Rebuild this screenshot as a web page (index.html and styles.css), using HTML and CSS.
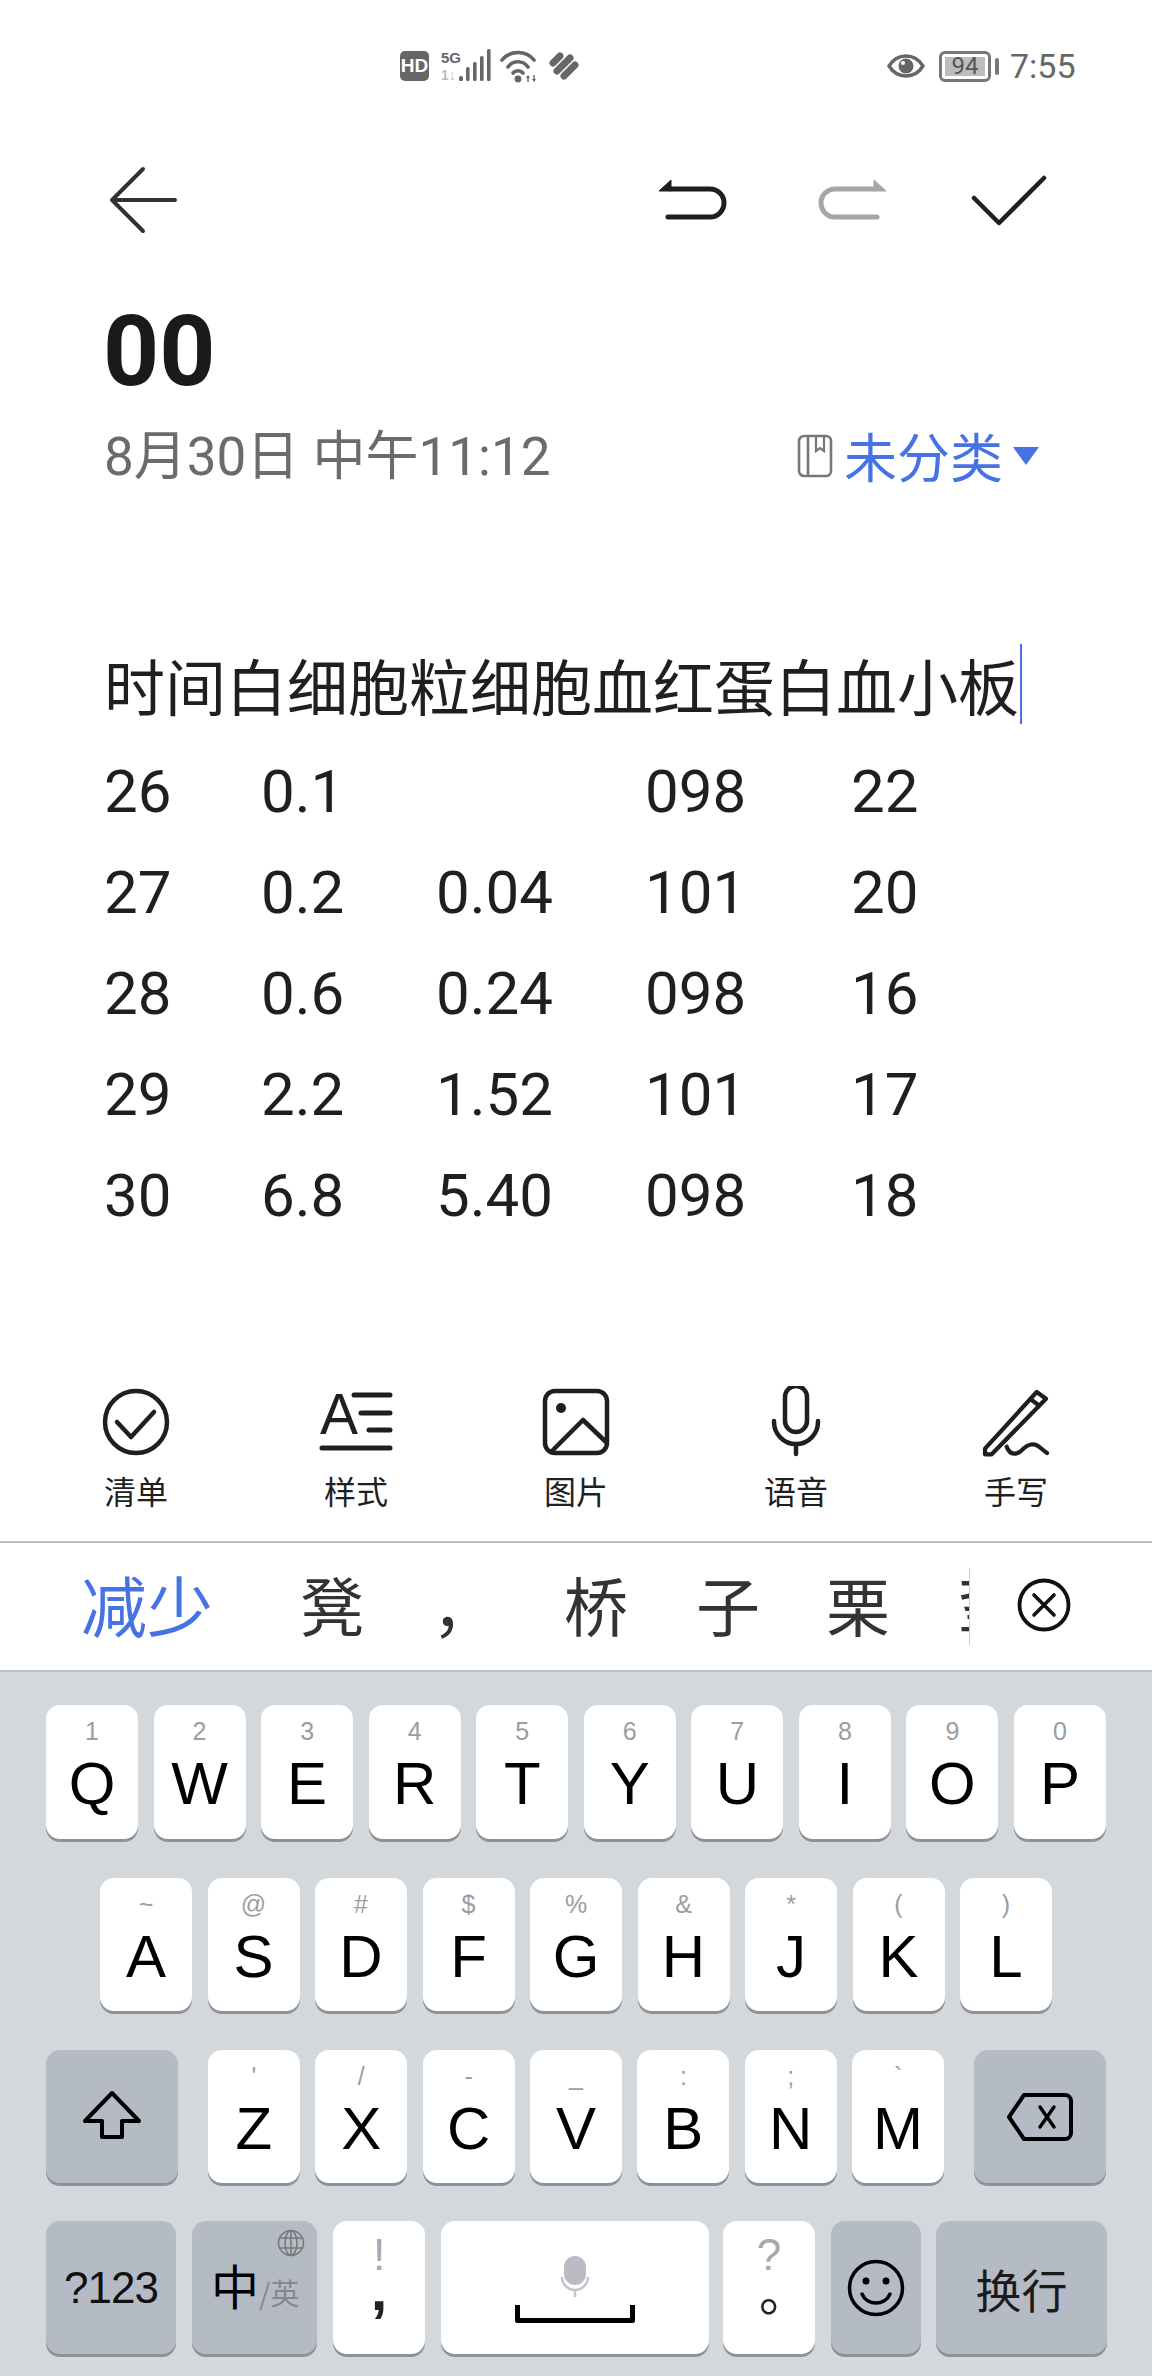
FILE: index.html
```html
<!DOCTYPE html>
<html lang="zh-CN">
<head>
<meta charset="utf-8">
<title>备忘录</title>
<link rel="stylesheet" href="styles.css">
</head>
<body>
<div class="page">
  <header class="status">
    <span class="hd">HD</span>
    <div class="net"><span class="net-5g">5G</span><span class="net-lte">1↓</span></div>
    <svg class="sig" width="36" height="34" viewBox="0 0 36 34"><g fill="#666"><rect x="0" y="27" width="4" height="5" rx="1.5"/><rect x="7" y="18" width="3.6" height="14" rx="1.5"/><rect x="14" y="13" width="3.6" height="19" rx="1.5"/><rect x="21" y="7" width="3.6" height="25" rx="1.5"/><rect x="28" y="0" width="3.6" height="32" rx="1.5"/></g></svg>
    <svg class="wifi" width="40" height="34" viewBox="0 0 40 34"><g fill="none" stroke="#666" stroke-width="3.6" stroke-linecap="round"><path d="M2 11C10 1 26 1 34 11"/><path d="M8 18C13 11 23 11 28 18"/><path d="M13 24C15.5 21 20.5 21 23 24"/></g><circle cx="18" cy="30" r="3.4" fill="#666"/><path d="M28 26l-2 3h1.3v4h1.4v-4H30zM34 33l2-3h-1.3v-4h-1.4v4H32z" fill="#666"/></svg>
    <svg class="heart" width="34" height="30" viewBox="0 0 34 30"><path d="M6 12L13 5M10 20L23 7M17 25L28 14" fill="none" stroke="#666" stroke-width="7" stroke-linecap="round"/></svg>
    <svg class="eye" width="38" height="24" viewBox="0 0 38 24"><path d="M2 12C7 4 13 2 19 2s12 2 17 10c-5 8-11 10-17 10S7 20 2 12z" fill="none" stroke="#666" stroke-width="3.4"/><circle cx="19" cy="12" r="7.5" fill="#666"/><circle cx="16" cy="9" r="2" fill="#fff"/></svg>
    <div class="batt"><span class="batt-num">94</span></div>
    <span class="batt-nub"></span>
    <span class="clock">7:55</span>
  </header>

  <nav class="toolbar">
    <svg width="68" height="68" viewBox="0 0 68 68"><path d="M34 3L3 34L34 65M3 34H66" fill="none" stroke="#333" stroke-width="4" stroke-linecap="round" stroke-linejoin="round"/></svg>
    <svg class="tb-undo" width="76" height="46" viewBox="0 0 76 46"><path d="M4 14L16 3V14z" fill="#1f1f1f" stroke="#1f1f1f" stroke-width="1" stroke-linejoin="round"/><path d="M16 12H55a14 14 0 0 1 0 28H13" fill="none" stroke="#1f1f1f" stroke-width="5" stroke-linecap="round"/></svg>
    <svg class="tb-redo" width="76" height="46" viewBox="0 0 76 46"><g transform="matrix(-1 0 0 1 76 0)"><path d="M4 14L16 3V14z" fill="#a6a6a6" stroke="#a6a6a6" stroke-width="1" stroke-linejoin="round"/><path d="M16 12H55a14 14 0 0 1 0 28H13" fill="none" stroke="#a6a6a6" stroke-width="5" stroke-linecap="round"/></g></svg>
    <svg class="tb-check" width="80" height="54" viewBox="0 0 80 54"><path d="M4 23L29 48L74 3" fill="none" stroke="#1f1f1f" stroke-width="4.5" stroke-linecap="round" stroke-linejoin="round"/></svg>
  </nav>

  <h1 class="title">00</h1>
  <div class="meta">
    <span class="date">8月30日 中午11:12</span>
    <svg class="book" width="36" height="44" viewBox="0 0 36 44"><rect x="2" y="2" width="32" height="40" rx="5" fill="none" stroke="#777" stroke-width="2.6"/><path d="M11 2V42" stroke="#777" stroke-width="2.6"/><path d="M19 2V17l4-3 4 3V2" fill="none" stroke="#777" stroke-width="2.2"/></svg>
    <span class="folder">未分类</span>
    <span class="tri"></span>
  </div>

  <main class="note">
    <div class="note-head"><span>时间白细胞粒细胞血红蛋白血小板</span><span class="caret"></span></div>
    <div class="grid">
      <span>26</span><span>0.1</span><span></span><span>098</span><span>22</span>
      <span>27</span><span>0.2</span><span>0.04</span><span>101</span><span>20</span>
      <span>28</span><span>0.6</span><span>0.24</span><span>098</span><span>16</span>
      <span>29</span><span>2.2</span><span>1.52</span><span>101</span><span>17</span>
      <span>30</span><span>6.8</span><span>5.40</span><span>098</span><span>18</span>
    </div>
  </main>

  <section class="tools">
    <div class="tool">
      <svg width="72" height="72" viewBox="0 0 72 72"><circle cx="36" cy="36" r="31" fill="none" stroke="#1f1f1f" stroke-width="4.5"/><path d="M17 36L31 51L54 26" fill="none" stroke="#1f1f1f" stroke-width="4.5" stroke-linecap="round" stroke-linejoin="round"/></svg>
      <span>清单</span>
    </div>
    <div class="tool">
      <svg class="tool-a" width="78" height="72" viewBox="0 0 78 72"><text x="3" y="48" class="icon-a">A</text><g stroke="#1f1f1f" stroke-width="5" stroke-linecap="round"><path d="M37 9H73M44 27H73M52 44H73M5 62H73"/></g></svg>
      <span>样式</span>
    </div>
    <div class="tool">
      <svg width="72" height="72" viewBox="0 0 72 72"><rect x="5" y="5" width="62" height="62" rx="10" fill="none" stroke="#1f1f1f" stroke-width="4.5"/><circle cx="21" cy="22" r="5" fill="#1f1f1f"/><path d="M12 65L43 34L66 56" fill="none" stroke="#1f1f1f" stroke-width="4.5" stroke-linejoin="round"/></svg>
      <span>图片</span>
    </div>
    <div class="tool">
      <svg width="72" height="72" viewBox="0 8 72 72"><rect x="25" y="8" width="22" height="46" rx="11" fill="none" stroke="#1f1f1f" stroke-width="4.5"/><path d="M14 43v1a22 22 0 0 0 44 0v-1M36 66V76" fill="none" stroke="#1f1f1f" stroke-width="4.5" stroke-linecap="round"/></svg>
      <span>语音</span>
    </div>
    <div class="tool">
      <svg width="72" height="72" viewBox="0 0 72 72"><path d="M5 62.7L56.7 6L66 12.7L11.7 68.3H5zM51.7 14L61 21" fill="none" stroke="#1f1f1f" stroke-width="4.2" stroke-linejoin="round"/><path d="M26.7 60.7C30 70 38 69 43 63c5-5 11-6 15-3 3 2 6 5 9 7" fill="none" stroke="#1f1f1f" stroke-width="4.2" stroke-linecap="round"/></svg>
      <span>手写</span>
    </div>
  </section>

  <section class="cands">
    <span class="cand cand-on">减少</span>
    <span class="cand c2">凳</span>
    <span class="cand c3">，</span>
    <span class="cand c4">桥</span>
    <span class="cand c5">子</span>
    <span class="cand c6">栗</span>
    <span class="cand-clip"><span class="cand">垫</span></span>
    <svg class="cand-x" width="54" height="54" viewBox="0 0 54 54"><circle cx="27" cy="27" r="24.5" fill="none" stroke="#111" stroke-width="3.8"/><path d="M17 17L37 37M37 17L17 37" stroke="#111" stroke-width="3.6" stroke-linecap="round"/></svg>
  </section>

  <section class="kbd">
    <div class="row row-q">
      <div class="key"><i>1</i><b>Q</b></div><div class="key"><i>2</i><b>W</b></div><div class="key"><i>3</i><b>E</b></div><div class="key"><i>4</i><b>R</b></div><div class="key"><i>5</i><b>T</b></div><div class="key"><i>6</i><b>Y</b></div><div class="key"><i>7</i><b>U</b></div><div class="key"><i>8</i><b>I</b></div><div class="key"><i>9</i><b>O</b></div><div class="key"><i>0</i><b>P</b></div>
    </div>
    <div class="row row-a">
      <div class="key"><i>~</i><b>A</b></div><div class="key"><i>@</i><b>S</b></div><div class="key"><i>#</i><b>D</b></div><div class="key"><i>$</i><b>F</b></div><div class="key"><i>%</i><b>G</b></div><div class="key"><i>&amp;</i><b>H</b></div><div class="key"><i>*</i><b>J</b></div><div class="key"><i>(</i><b>K</b></div><div class="key"><i>)</i><b>L</b></div>
    </div>
    <div class="row">
      <div class="key fn k-side"><svg class="shift" width="60" height="50" viewBox="0 0 60 50"><path d="M30 3L3 31H20V47H40V31H57Z" fill="none" stroke="#000" stroke-width="4" stroke-linejoin="round"/></svg></div>
      <div class="letters">
        <div class="key"><i>'</i><b>Z</b></div><div class="key"><i>/</i><b>X</b></div><div class="key"><i>-</i><b>C</b></div><div class="key"><i>_</i><b>V</b></div><div class="key"><i>:</i><b>B</b></div><div class="key"><i>;</i><b>N</b></div><div class="key"><i>`</i><b>M</b></div>
      </div>
      <div class="key fn k-side"><svg width="66" height="50" viewBox="0 0 66 50"><path d="M17 3H58a6 6 0 0 1 6 6V41a6 6 0 0 1-6 6H17L2 25Z" fill="none" stroke="#000" stroke-width="4" stroke-linejoin="round"/><path d="M33 15L47 35M47 15L33 35" stroke="#000" stroke-width="3.4" stroke-linecap="round"/></svg></div>
    </div>
    <div class="row row-last">
      <div class="key fn k-sym"><span class="sym">?123</span></div>
      <div class="key fn k-lang">
        <svg class="globe" width="28" height="28" viewBox="0 0 28 28"><g fill="none" stroke="#777" stroke-width="1.5"><circle cx="14" cy="14" r="12.5"/><ellipse cx="14" cy="14" rx="6" ry="12.5"/><path d="M14 1.5V26.5M2 9H26M2 19H26"/></g></svg>
        <span class="zh">中</span><span class="en">/英</span>
      </div>
      <div class="key k-p"><span class="p-hint">!</span><span class="p-comma">,</span></div>
      <div class="key k-space">
        <svg width="120" height="72" viewBox="0 0 120 72"><rect x="49" y="1" width="22" height="29" rx="11" fill="#b9bcc2"/><path d="M47 22a13 13 0 0 0 26 0M60 36V42" fill="none" stroke="#c2c5ca" stroke-width="2.5"/><path d="M2.5 50V65.5H117.5V50" fill="none" stroke="#000" stroke-width="5" stroke-linejoin="round"/></svg>
      </div>
      <div class="key k-p k-period"><span class="p-hint">?</span><span class="p-stop">。</span></div>
      <div class="key fn k-emoji"><svg width="58" height="60" viewBox="0 0 58 60"><circle cx="29" cy="30" r="26.5" fill="none" stroke="#000" stroke-width="3.5"/><circle cx="19" cy="23" r="3.5"/><circle cx="39" cy="23" r="3.5"/><path d="M15 36C20 48 38 48 43 36" fill="none" stroke="#000" stroke-width="3.5" stroke-linecap="round"/></svg></div>
      <div class="key fn k-enter"><span class="enter">换行</span></div>
    </div>
  </section>
</div>
</body>
</html>
```

FILE: styles.css
```css
* { box-sizing: border-box; }
html, body { margin: 0; padding: 0; background: #fff; }
.page { width: 1152px; height: 2376px; display: flex; flex-direction: column; overflow: hidden; font-family: Roboto, "Noto Sans CJK SC", sans-serif; color: #1f1f1f; }

.status { height: 132px; display: flex; align-items: center; padding-left: 400px; color: #666; flex: none; }
.hd { width: 29px; height: 30px; background: #666; border-radius: 5px; color: #fff; font-size: 19px; font-weight: 700; display: flex; align-items: center; justify-content: center; font-family: "Liberation Sans Narrow", "Liberation Sans", sans-serif; }
.net { width: 18px; margin-left: 12px; display: flex; flex-direction: column; line-height: 14px; font-family: "Liberation Sans Narrow", "Liberation Sans", sans-serif; }
.net-5g { font-size: 15px; font-weight: 700; }
.net-lte { font-size: 14px; color: #bbb; margin-top: 3px; font-weight: 700; }
.wifi { margin-left: 5px; }
.heart { margin-left: 7px; }
.eye { margin-left: 306px; }
.batt { width: 52px; height: 31px; margin-left: 14px; border: 3px solid #777; border-radius: 6px; padding: 3px; display: flex; }
.batt-num { flex: 1; background: #bdbdbd; color: #555; font-size: 24px; line-height: 19px; text-align: center; }
.batt-nub { width: 4px; height: 17px; background: #777; border-radius: 2px; margin-left: 4px; }
.clock { font-size: 34px; margin-left: 11px; color: #666; }

.toolbar { height: 136px; display: flex; align-items: center; padding-left: 109px; flex: none; }
.tb-undo { margin-left: 478px; }
.tb-redo { margin-left: 83px; }
.tb-check { margin-left: 80px; margin-top: 4px; }

.title { margin: 0; height: 150px; padding: 24px 0 0 103px; font-size: 98px; line-height: 120px; font-weight: 700; color: #1a1a1a; flex: none; }

.meta { height: 76px; display: flex; align-items: center; padding-left: 104px; flex: none; }
.date { font-size: 53px; color: #6b6b6b; width: 693px; margin-bottom: 8px; white-space: nowrap; }
.folder { font-size: 53px; color: #4672e4; margin-left: 11px; margin-bottom: 2px; }
.tri { margin-left: 10px; width: 0; height: 0; border-left: 13px solid transparent; border-right: 13px solid transparent; border-top: 18px solid #4672e4; }

.note { height: 892px; padding: 150px 0 0 104px; font-size: 60px; color: #1f1f1f; flex: none; }
.note-head { display: flex; align-items: center; height: 80px; font-size: 61px; white-space: nowrap; }
.caret { width: 2px; height: 80px; background: #4672e4; margin-left: 1px; }
.grid { display: grid; grid-template-columns: 157px 175px 209px 206px 1fr; grid-auto-rows: 101px; margin-top: 17px; line-height: 101px; }

.tools { height: 155px; display: flex; padding-left: 26px; flex: none; }
.tool { width: 220px; display: flex; flex-direction: column; align-items: center; }
.tool span { font-size: 32px; line-height: 40px; margin-top: 15px; color: #1f1f1f; }
.tool-a { overflow: visible; }
.icon-a { font-family: "Liberation Sans", sans-serif; font-size: 57px; fill: #1f1f1f; }

.cands { height: 131px; border-top: 2px solid #bdbdbd; border-bottom: 2px solid #bdbdbd; display: flex; align-items: center; padding: 6px 0 0 81px; flex: none; }
.cand { font-size: 64px; color: #333; line-height: 70px; }
.cand-on { color: #4672e4; font-size: 66px; }
.c2 { margin-left: 87px; }
.c3 { margin-left: 68px; }
.c4 { margin-left: 68px; }
.c5 { margin-left: 68px; }
.c6 { margin-left: 66px; }
.cand-clip { width: 12px; margin-left: 68px; overflow: hidden; border-right: 1px solid #ccc; height: 77px; margin-bottom: 6px; display: flex; align-items: center; }
.cand-x { margin-left: 47px; margin-bottom: 9px; }

.kbd { flex: 1; background: #d3d8dc; padding: 33px 46px 0; font-family: "Liberation Sans", sans-serif; }
.row { height: 133px; margin-bottom: 38px; display: flex; gap: 15.5px; }
.row-q { height: 134px; margin-bottom: 39px; }
.row-a { padding: 0 54px; margin-bottom: 39px; }
.letters { flex: 1; display: flex; gap: 15.5px; margin: 0 14.5px; }
.row-last { gap: 16px; }
.key { flex: 1; background: #fff; border-radius: 14px; box-shadow: 0 3px 0 #8e9197; display: flex; flex-direction: column; align-items: center; color: #000; position: relative; }
.key i { font-style: normal; font-size: 25px; line-height: 52px; height: 52px; color: #9a9da3; }
.key b { font-weight: 400; font-size: 60px; line-height: 54px; height: 54px; }
.fn { background: #b5bbc5; justify-content: center; }
.k-side { flex: 0 0 132px; }
.shift { margin-bottom: 4px; }
.k-sym { flex: 0 0 130px; }
.k-lang { flex: 0 0 125px; flex-direction: row; align-items: flex-end; padding: 0 0 40px 19px; justify-content: flex-start; }
.k-p { flex: 0 0 92px; justify-content: flex-start; }
.k-space { flex: 0 0 268px; justify-content: flex-start; padding-top: 34px; }
.k-period { margin-left: -2px; }
.k-emoji { flex: 0 0 90px; }
.k-enter { flex: 0 0 171px; margin-left: -1px; }
.sym { font-size: 44px; letter-spacing: -1px; color: #111; }
.globe { position: absolute; top: 8px; right: 12px; }
.zh { font-family: "Noto Sans CJK SC", sans-serif; font-size: 48px; line-height: 60px; color: #000; }
.en { font-family: "Noto Sans CJK SC", sans-serif; font-size: 29px; line-height: 44px; color: #85888f; }
.p-hint { font-size: 44px; line-height: 46px; height: 46px; margin-top: 11px; color: #a6a9ae; }
.p-comma { font-size: 60px; font-weight: 700; line-height: 60px; height: 60px; margin-top: -18px; color: #222; }
.p-stop { font-family: "Noto Sans CJK SC", sans-serif; font-size: 50px; line-height: 60px; height: 60px; margin: -19px 0 0 30px; color: #222; }
.enter { font-family: "Noto Sans CJK SC", sans-serif; font-size: 46px; color: #1a1a1a; }
```
